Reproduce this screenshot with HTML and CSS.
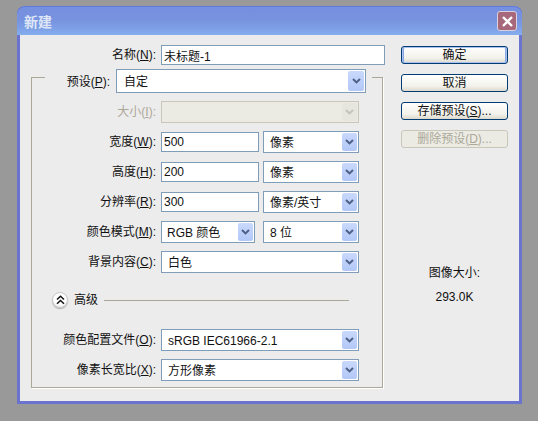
FILE: index.html
```html
<!DOCTYPE html>
<html lang="zh">
<head>
<meta charset="utf-8">
<title>新建</title>
<link rel="stylesheet" href="styles.css">
</head>
<body>
<svg class="defs" width="0" height="0" aria-hidden="true">
  <symbol id="chev" viewBox="0 0 9 6"><path d="M1 1 L4.5 4.4 L8 1" fill="none" stroke="currentColor" stroke-width="2"/></symbol>
</svg>
<div class="window">
  <header class="titlebar">
    <span class="title">新建</span>
    <button class="close" aria-label="关闭"><svg width="13" height="13" viewBox="0 0 13 13"><path d="M2 2 L11 11 M11 2 L2 11" stroke="#fff" stroke-width="2.4" fill="none"/></svg></button>
  </header>
  <div class="content">
    <main class="left">
      <div class="name-row">
        <label class="label name-label">名称(<u>N</u>):</label>
        <input class="input name-input" value="未标题-1">
      </div>
      <section class="group">
        <div class="preset-row">
          <label class="label preset-label">预设(<u>P</u>):</label>
          <div class="select preset-select"><span>自定</span><i class="arrow"><svg width="9" height="6"><use href="#chev"/></svg></i></div>
        </div>
        <div class="rows">
          <div class="row">
            <label class="label disabled-text">大小(<u>I</u>):</label>
            <div class="select full disabled"><span></span><i class="arrow"><svg width="9" height="6"><use href="#chev"/></svg></i></div>
          </div>
          <div class="row">
            <label class="label">宽度(<u>W</u>):</label>
            <input class="input num" value="500">
            <div class="select unit"><span>像素</span><i class="arrow"><svg width="9" height="6"><use href="#chev"/></svg></i></div>
          </div>
          <div class="row">
            <label class="label">高度(<u>H</u>):</label>
            <input class="input num" value="200">
            <div class="select unit"><span>像素</span><i class="arrow"><svg width="9" height="6"><use href="#chev"/></svg></i></div>
          </div>
          <div class="row">
            <label class="label">分辨率(<u>R</u>):</label>
            <input class="input num" value="300">
            <div class="select unit"><span>像素/英寸</span><i class="arrow"><svg width="9" height="6"><use href="#chev"/></svg></i></div>
          </div>
          <div class="row">
            <label class="label">颜色模式(<u>M</u>):</label>
            <div class="select mode"><span>RGB 颜色</span><i class="arrow"><svg width="9" height="6"><use href="#chev"/></svg></i></div>
            <div class="select unit"><span>8 位</span><i class="arrow"><svg width="9" height="6"><use href="#chev"/></svg></i></div>
          </div>
          <div class="row">
            <label class="label">背景内容(<u>C</u>):</label>
            <div class="select full"><span>白色</span><i class="arrow"><svg width="9" height="6"><use href="#chev"/></svg></i></div>
          </div>
        </div>
        <div class="advanced">
          <button class="disclosure" aria-label="高级"><svg width="9" height="10" viewBox="0 0 9 10"><path d="M1 4.5 L4.5 1.2 L8 4.5 M1 8.8 L4.5 5.5 L8 8.8" fill="none" stroke="#111" stroke-width="1.5"/></svg></button>
          <span class="adv-text">高级</span>
          <span class="adv-line"></span>
        </div>
        <div class="rows">
          <div class="row">
            <label class="label">颜色配置文件(<u>O</u>):</label>
            <div class="select full"><span>sRGB IEC61966-2.1</span><i class="arrow"><svg width="9" height="6"><use href="#chev"/></svg></i></div>
          </div>
          <div class="row">
            <label class="label">像素长宽比(<u>X</u>):</label>
            <div class="select full"><span>方形像素</span><i class="arrow"><svg width="9" height="6"><use href="#chev"/></svg></i></div>
          </div>
        </div>
      </section>
    </main>
    <aside class="right">
      <button class="btn default">确定</button>
      <button class="btn">取消</button>
      <button class="btn">存储预设(<u>S</u>)...</button>
      <button class="btn off">删除预设(<u>D</u>)...</button>
      <div class="info">
        <div>图像大小:</div>
        <div>293.0K</div>
      </div>
    </aside>
  </div>
</div>
</body>
</html>
```

FILE: styles.css
```css
* { box-sizing: border-box; }
html, body { margin: 0; padding: 0; }
body {
  width: 538px;
  height: 421px;
  background: #999999;
  font: 12px/14px "Liberation Sans", "Noto Sans CJK SC", sans-serif;
  color: #111;
  overflow: hidden;
  padding: 6px 0 0 17px;
}
.defs { position: absolute; }
u { text-decoration: underline; }

.window {
  width: 505px;
  height: 398px;
  background: #ececec;
  border: 3px solid #6a74cf;
  border-top: 0;
  border-radius: 8px 8px 0 0;
}
.titlebar {
  height: 29px;
  margin: 0 -3px;
  padding: 2px 5px 0 7px;
  border-radius: 8px 8px 0 0;
  border-top: 1px solid #5f78dc;
  background: linear-gradient(#7690e0 0, #7792de 45%, #7d9fe6 75%, #86aeee 100%);
  display: flex;
  align-items: center;
  justify-content: space-between;
}
.title {
  font-size: 14px;
  font-weight: 700;
  color: #dfe7f7;
}
.close {
  width: 20px;
  height: 20px;
  padding: 0;
  margin-top: -2px;
  border: 1px solid #d9d3e0;
  border-radius: 3px;
  background: #a8687c;
  display: flex;
  align-items: center;
  justify-content: center;
}

.content {
  display: flex;
  gap: 16px;
  padding: 10px 0 0 11px;
}
.left { width: 354px; }
.right {
  width: 107px;
  padding-top: 1px;
  display: flex;
  flex-direction: column;
  gap: 10px;
}

.label { text-align: right; white-space: nowrap; }
.disabled-text { color: #aca899; }
.name-row { display: flex; align-items: center; gap: 5px; height: 20px; }
.name-label { width: 125px; }
.name-input { width: 224px; }

.input {
  height: 20px;
  padding: 0 2px;
  border: 1px solid #7f9db9;
  background: #fff;
  font: inherit;
  color: #111;
  outline: 0;
}
.num { width: 98px; margin-right: -1px; }

.select {
  height: 22px;
  display: flex;
  align-items: center;
  justify-content: space-between;
  padding: 1px 1px 1px 6px;
  border: 1px solid #7f9db9;
  background: #fff;
}
.select > span { padding-top: 1px; }
.arrow {
  width: 15px;
  height: 100%;
  display: flex;
  align-items: center;
  justify-content: center;
  color: #4d6185;
  border-radius: 2px;
  background: linear-gradient(#c9d8fc, #b3c8f7);
}
.mode > span { margin-left: -1px; }
.full { width: 198px; }
.unit { width: 96px; margin-left: 5px; }
.mode { width: 94px; margin-right: 3px; }
.disabled { background: #ebebe4; border-color: #c9c7ba; }
.disabled .arrow { background: #e6e5de; color: #c4c3b8; }

.group {
  width: 352px;
  height: 311px;
  margin-top: 12px;
  border: 1px solid #aca899;
  box-shadow: 1px 1px 0 #fff;
}
.preset-row {
  width: 327px;
  height: 24px;
  margin: -9px 0 8px 13px;
  padding-right: 6px;
  background: #ececec;
  display: flex;
  align-items: center;
  gap: 6px;
}
.preset-label { width: 65px; padding-top: 1px; }
.preset-select { width: 250px; height: 24px; padding-left: 7px; }
.preset-select .arrow { width: 16px; }

.rows { display: flex; flex-direction: column; gap: 8px; }
.row { display: flex; align-items: center; height: 22px; }
.row > .label { width: 124px; margin-right: 5px; }

.advanced {
  height: 18px;
  margin: 18px 33px 20px 20px;
  display: flex;
  align-items: center;
}
.disclosure {
  width: 16px;
  height: 16px;
  padding: 0;
  border: 1px solid #c8c8c8;
  border-radius: 50%;
  background: radial-gradient(circle at 50% 35%, #fff 55%, #dcdcdc);
  box-shadow: 0 1px 1px #aaa;
  display: flex;
  align-items: center;
  justify-content: center;
}
.adv-text { margin-left: 6px; }
.adv-line { flex: 1; height: 1px; margin-left: 6px; background: #aca899; }

.btn {
  height: 18px;
  padding: 0;
  border: 1px solid #003c74;
  border-radius: 3px;
  background: linear-gradient(#fff, #f2f1ea 70%, #dcd8cc);
  font: inherit;
  color: #111;
}
.default {
  box-shadow: inset 0 0 0 1px #a9c1ee, inset 2px 0 0 #8aa8e6, inset -2px 0 0 #8aa8e6;
}
.off {
  border-color: #c9c7ba;
  background: #ebebe4;
  color: #aca899;
}
.info {
  margin-top: 108px;
  display: flex;
  flex-direction: column;
  gap: 10px;
  text-align: center;
}
```
